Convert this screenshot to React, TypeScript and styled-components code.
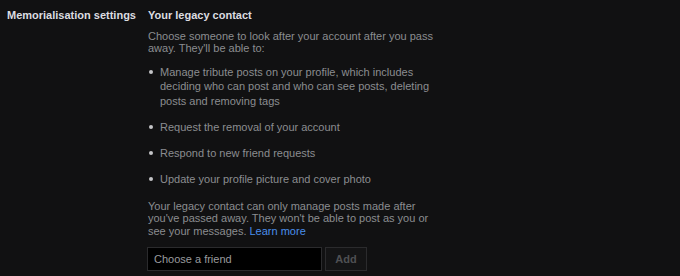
import styled, { createGlobalStyle } from "styled-components";

const colors = {
  bg: "#111112",
  heading: "#dcdde0",
  text: "#8b8d90",
  link: "#4a8eea",
  border: "#2b2b2d",
  inputBg: "#000000",
  buttonBg: "#141415",
  buttonText: "#4f5053",
};

const GlobalStyle = createGlobalStyle`
  html, body {
    margin: 0;
    padding: 0;
    background: ${colors.bg};
  }
  body {
    font-family: "Liberation Sans", Arial, sans-serif;
    font-size: 11px;
    color: ${colors.text};
    -webkit-font-smoothing: antialiased;
  }
`;

const Page = styled.div`
  display: grid;
  grid-template-columns: 141px 300px;
  padding: 8px 0 0 7px;
  width: 680px;
  height: 276px;
  box-sizing: border-box;
`;

const Label = styled.div`
  font-weight: bold;
  color: ${colors.heading};
  line-height: 14px;
`;

const Content = styled.div`
  display: flex;
  flex-direction: column;
`;

const Title = styled.h2`
  margin: 0 0 8px;
  font-size: 11px;
  line-height: 14px;
  font-weight: bold;
  color: ${colors.heading};
`;

const Paragraph = styled.p`
  margin: 0;
  line-height: 12.3px;
`;

const List = styled.ul`
  list-style: none;
  margin: 10px 0 14px;
  padding: 0;
  display: flex;
  flex-direction: column;
  gap: 11.5px;
`;

const Item = styled.li`
  position: relative;
  padding-left: 12px;
  line-height: 14.5px;

  &::before {
    content: "";
    position: absolute;
    left: 1px;
    top: 5.5px;
    width: 4px;
    height: 4px;
    border-radius: 50%;
    background: #c4c5c8;
  }
`;

const Link = styled.a`
  display: inline-block;
  line-height: 12px;
  color: ${colors.link};
  text-decoration: none;
`;

const Row = styled.div`
  display: flex;
  gap: 3px;
  margin-top: 10px;
  margin-left: -1px;
`;

const FriendInput = styled.input`
  width: 175px;
  height: 24px;
  box-sizing: border-box;
  background: ${colors.inputBg};
  border: 1px solid ${colors.border};
  color: ${colors.heading};
  font-family: inherit;
  font-size: 11px;
  padding: 0 6px;
  outline: none;

  &::placeholder {
    color: #9a9b9e;
  }
`;

const AddButton = styled.button`
  width: 42px;
  height: 24px;
  box-sizing: border-box;
  background: ${colors.buttonBg};
  border: 1px solid ${colors.border};
  color: ${colors.buttonText};
  font-family: inherit;
  font-size: 11px;
  font-weight: bold;
  padding: 0;
`;

const powers = [
  "Manage tribute posts on your profile, which includes deciding who can post and who can see posts, deleting posts and removing tags",
  "Request the removal of your account",
  "Respond to new friend requests",
  "Update your profile picture and cover photo",
];

const App = () => {
  return (
    <>
      <GlobalStyle />
      <Page>
        <Label>Memorialisation settings</Label>
        <Content>
          <Title>Your legacy contact</Title>
          <Paragraph>
            Choose someone to look after your account after you pass away.
            They'll be able to:
          </Paragraph>
          <List>
            {powers.map((p) => (
              <Item key={p}>{p}</Item>
            ))}
          </List>
          <Paragraph>
            Your legacy contact can only manage posts made after you've passed
            away. They won't be able to post as you or see your messages.{" "}
            <Link href="#">Learn more</Link>
          </Paragraph>
          <Row>
            <FriendInput placeholder="Choose a friend" />
            <AddButton disabled>Add</AddButton>
          </Row>
        </Content>
      </Page>
    </>
  );
};

export default App;
